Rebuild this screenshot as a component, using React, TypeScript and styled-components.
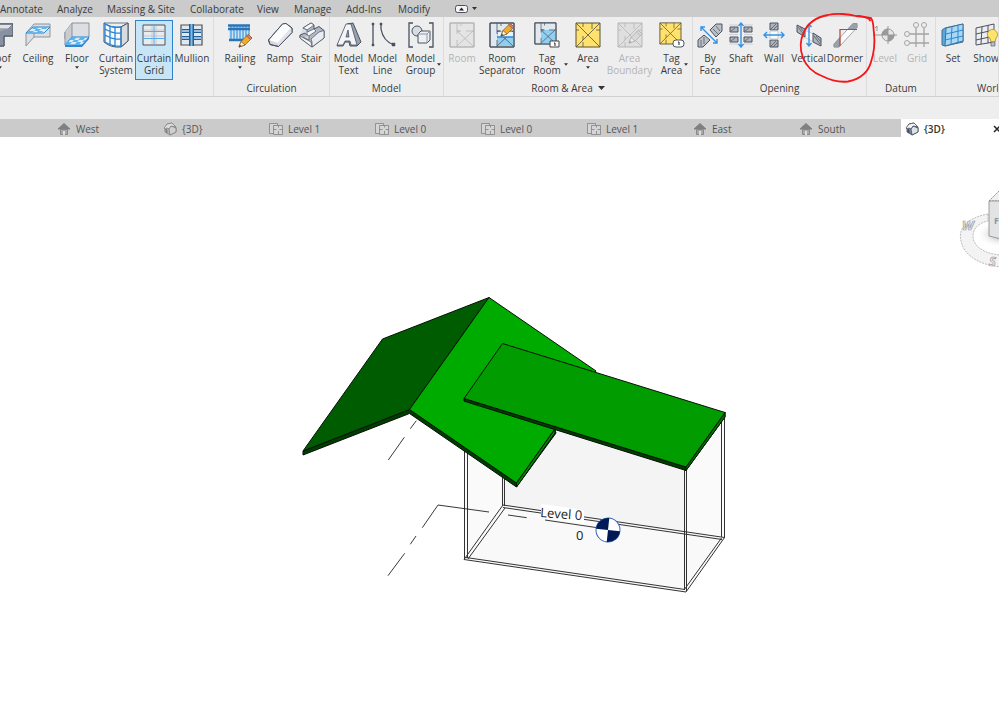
import React from "react";
import styled, { createGlobalStyle } from "styled-components";

const GlobalStyle = createGlobalStyle`
  * { box-sizing: border-box; }
  html, body, #root { height: 100%; }
  body {
    margin: 0;
    overflow: hidden;
    background: #fff;
    color: #3a3a3a;
    font-family: "Open Sans", "Noto Sans", sans-serif;
    font-size: 10px;
    line-height: 12px;
  }
  button {
    font: inherit;
    color: inherit;
    border: 0;
    padding: 0;
    margin: 0;
    background: none;
    white-space: nowrap;
  }
`;

const Page = styled.div`
  display: flex;
  flex-direction: column;
  min-height: 100%;
  overflow: hidden;
`;

const MenuBar = styled.nav`
  display: flex;
  align-items: center;
  height: 17px;
  gap: 16px;
  background: #cbcbcb;
  overflow: hidden;
`;

const MenuItem = styled.button<{ $w: number }>`
  flex: none;
  width: ${(p) => p.$w}px;
  text-align: left;
`;

const RibbonToggle = styled.button`
  display: flex;
  align-items: center;
  gap: 4px;
  margin-left: 9px;
`;

const Ribbon = styled.div`
  position: relative;
  display: flex;
  height: 80px;
  background: #eee;
  border-bottom: 1px solid #d0d0d0;
`;

const Panel = styled.section<{ $w?: number; $end?: boolean }>`
  flex: ${(p) => (p.$w ? "none" : "1")};
  width: ${(p) => (p.$w ? `${p.$w}px` : "auto")};
  min-width: 0;
  display: flex;
  flex-direction: column;
  overflow: hidden;
  border-right: 1px solid #dcdcdc;
  padding-right: ${(p) => (p.$end ? 2 : 0)}px;
`;

const ToolRow = styled.div<{ $end?: boolean }>`
  display: flex;
  justify-content: ${(p) => (p.$end ? "flex-end" : "flex-start")};
  height: 65px;
  padding-top: 3px;
`;

const ToolButton = styled.button<{ $w: number; $active?: boolean }>`
  position: relative;
  flex: none;
  display: flex;
  flex-direction: column;
  align-items: center;
  width: ${(p) => p.$w}px;
  height: 60px;
  padding-top: ${(p) => (p.$active ? 1 : 2)}px;
  border: ${(p) => (p.$active ? "1px solid #2f83cc" : "0")};
  background: ${(p) => (p.$active ? "#c6e6f7" : "transparent")};
  &:disabled {
    color: #b4b4b4;
  }
`;

const ToolIcon = styled.svg`
  flex: none;
  display: block;
  width: 26px;
  height: 26px;
  margin-bottom: 4px;
`;

const Caret = styled.svg`
  display: block;
  width: 4px;
  height: 3px;
  margin-top: 2px;
`;

const SideCaret = styled(Caret)`
  position: absolute;
  right: 2px;
  bottom: 14px;
`;

const PanelTitle = styled.div<{ $left?: boolean }>`
  display: flex;
  align-items: center;
  justify-content: ${(p) => (p.$left ? "flex-start" : "center")};
  gap: 5px;
  padding-left: ${(p) => (p.$left ? 41 : 0)}px;
  white-space: nowrap;
`;

const OptionsBar = styled.div`
  height: 22px;
  background: #eee;
`;

const DocTabs = styled.div`
  display: flex;
  height: 18px;
  padding-left: 53px;
  background: #cbcbcb;
  overflow: hidden;
`;

const DocTab = styled.button<{ $active?: boolean }>`
  flex: none;
  display: flex;
  align-items: center;
  gap: 5px;
  width: 106px;
  padding: 2px 6px 0 4px;
  color: ${(p) => (p.$active ? "#333" : "#555")};
  font-weight: ${(p) => (p.$active ? 600 : 400)};
  background: ${(p) => (p.$active ? "#fff" : "transparent")};
`;

const DocIcon = styled.svg`
  flex: none;
  width: 14px;
  height: 14px;
`;

const CloseMark = styled.svg`
  width: 8px;
  height: 8px;
  margin-left: auto;
`;

const Viewport = styled.main`
  position: relative;
  flex: 1;
  overflow: hidden;
  background: #fff;
`;

const Model = styled.svg`
  display: block;
  width: 800px;
  height: 586px;
`;

const ViewCube = styled.svg`
  position: absolute;
  top: 48px;
  right: 0;
  width: 44px;
  height: 90px;
`;

const Markup = styled.svg`
  position: absolute;
  z-index: 2;
  left: 796px;
  top: -7px;
  width: 84px;
  height: 76px;
  pointer-events: none;
`;

const DARK = "#4a5260";
const BLUE = "#2b84d3";

const Pencil = ({ grey }: { grey?: boolean }) => (
  <g stroke={grey ? "#aaa" : "#7a5628"} strokeWidth=".7">
    <path d="M12 14 14 8.500 21 1.500 25 5 18 12Z" fill={grey ? "#d8d8d8" : "#f2ab29"} />
    <path d="M19.500 3 21 1.500 25 5 23.500 6.500Z" fill={grey ? "#ddd" : "#dd837c"} />
    <path d="M12 14 14 8.500 18 12Z" fill={grey ? "#eee" : "#fff1d2"} />
    <path d="m12 14 .8-2 1.400 1.300Z" fill={grey ? "#999" : "#222"} />
  </g>
);

const RoomBase = ({ line, fill, light }: { line: string; fill: string; light: string }) => (
  <g stroke={line} fill="none">
    <path d="M1 1h24v24H1z" fill={light} />
    <path d="M8 9h16v15H8z" fill={fill} stroke="none" />
    <path d="M8 1v8M8 18v7M8 9h3M17 9h8M12 1v3M12 9h-4v3M8 9l16 15M24 9 8 24" strokeWidth=".8" />
    <path d="M1 1h24v24H1z" />
  </g>
);

const AreaBase = ({ line, fill }: { line: string; fill: string }) => (
  <g stroke={line} fill="none">
    <path d="M1 1h24v24H1z" fill={fill} />
    <path d="M1 1l24 24M25 1 1 25M8 1v4M8 20v5M1 8h3M21 8h4M17 1v6M8 14v4" strokeWidth=".8" />
  </g>
);

const icons: Record<string, React.ReactNode> = {
  roof: (
    <g stroke={DARK}>
      <path d="M0 2h26v12h-9v10H9V14H0Z" fill="#aeb4bd" />
      <path d="M0 2h26l-5 5H0Z" fill="#dfe2e6" stroke="#7c8592" />
      <path d="M21 7l5-5v12l-9-1v11h-4V9Z" fill="#8992a0" stroke="none" />
      <path d="M0 2h26v12h-9v10H9V14H0" fill="none" />
    </g>
  ),
  ceiling: (
    <g>
      <path d="M9 2h16v13H9L1 24V11Z" fill="#dcdee2" stroke="#8d939b" />
      <path d="M9 11v4" stroke="#8d939b" />
      <path d="M8 5h17l-6 6H1Z" fill="#d9f0fc" stroke={BLUE} />
      <path d="M9 5h5l-2 2H7zM18 5h5l-2 2h-5zM11 7h5l-2 2h-5zM4 9h5l-2 2H2zM13 9h5l-2 2h-5z" fill="#5db4ec" />
    </g>
  ),
  floor: (
    <g>
      <path d="M8 1h17v14l-7 2H1V10Z" fill="#dcdee2" stroke="#8d939b" />
      <path d="M8 1v14L1 23V10" fill="#c8ccd1" stroke="#8d939b" />
      <path d="M8 15h17l-7 8H1Z" fill="#d9f0fc" stroke={BLUE} />
      <path d="M8 15h5l-3 3H5zM17 15h5l-3 3h-5zM10 18h5l-2 2H8zM20 18h3l-2 2h-3zM3 20h5l-3 3H1zM13 20h4l-2 3h-5z" fill="#5db4ec" />
      <path d="M1 23h17l7-8v2l-7 8H1Z" fill="#3487cd" />
    </g>
  ),
  system: (
    <g fill="none">
      <path d="M1 1q8 6 17 4L25 1v18l-7 6Q8 26 1 20Z" fill="#f7fafc" stroke={DARK} />
      <path d="m18 5 7-4v18l-7 6Z" fill="#d8dce1" stroke={DARK} />
      <path d="M2 7q8 5 16 4M2 13q8 5 16 4M2 2v18q8 5 16 4V5Q9 6 2 2M7 4v19M12 5v20" stroke={BLUE} strokeWidth="1.300" />
      <path d="M1 1h24" stroke="#69798c" />
    </g>
  ),
  curtain: (
    <g fill="none">
      <path d="M2 3h22v20H2z" fill="#e9ebed" stroke={DARK} />
      <path d="M3 8h20M3 14h20M11 4v18M15 4v18" stroke="#c5cad0" />
      <path d="M2 16.500h22M13 3v20M2 9.500h22" stroke="#5aa9ec" />
    </g>
  ),
  mullion: (
    <g fill="none">
      <path d="M2 3h21v20H2z" fill="#e4e7ea" stroke={DARK} strokeWidth="1.200" />
      <path d="M3 9h19M3 16h19" stroke="#215f9c" strokeWidth="4" />
      <path d="M3 9h19M3 16h19" stroke="#b9e1fb" strokeWidth="1.500" />
      <path d="M12.500 2v22" stroke="#215f9c" strokeWidth="5" />
      <path d="M12.500 2v22" stroke="#78bdf0" strokeWidth="2" />
    </g>
  ),
  railing: (
    <g>
      <path d="M2 3h20v15H2z" fill="#c5e4f8" />
      <path d="M4 3v14M7 3v14M10 3v14M13 3v14M16 3v14M19 3v14M22 3v10" stroke={BLUE} />
      <path d="M1 3.500h22M1 7h22M2 18h16" stroke="#2b75b7" strokeWidth="2.500" />
      <g transform="translate(0 11)"><Pencil /></g>
    </g>
  ),
  ramp: (
    <g stroke={DARK} strokeLinejoin="round">
      <path d="M1.500 18 15.500 2 19 1.500 25 6V10.500L11.500 24.500 3 22.500Z" fill="#d3d8de" />
      <path d="M2 18 15.500 2 19 1.500 24 6 10.500 21Z" fill="#fcfdfe" stroke="none" />
      <path d="M10.500 21 25 6V10.500L11.500 24.500Z" fill="#e2e5ea" stroke="none" />
      <path d="M1.500 18 15.500 2 19 1.500 25 6V10.500L11.500 24.500 3 22.500Z" fill="none" />
    </g>
  ),
  stair: (
    <g stroke={DARK} strokeLinejoin="round">
      <path d="M4 6 12 1 15 3V7L20 4.500 25 8.500V16L13 25 1 16V13L6 11Z" fill="#b0b8c3" />
      <path d="M4 6 12 1 15 3 8 8ZM6 11 15 7 17 9 10 14Z" fill="#f7f8fa" strokeWidth=".7" />
      <path d="M1 13 6 11 8 13V8L4 6M10 14V18L4 15" fill="#d9dee4" strokeWidth=".7" />
      <path d="M12 17 20 10 25 8.500V16L13 25V20Z" fill="#e9ecf0" strokeWidth=".7" />
      <path d="M1 14 12 20 13 25 1 16Z" fill="#f7f8fa" strokeWidth=".7" />
    </g>
  ),
  text: (
    <g stroke={DARK} strokeLinejoin="round">
      <path d="M11 2 17 1 25 20 21 24H14L13 20H9L7 24H1Z" fill="#98a2af" />
      <path d="M1 23 10 2h5l6 21h-6l-1-4H9l-2 4ZM10 15h3l-1-7Z" fill="#f3f5f8" strokeWidth=".8" />
    </g>
  ),
  line: (
    <g stroke={DARK} fill="none">
      <path d="M3 2v21M11 2v5q2 12 13 16" strokeWidth="1.300" />
      <path d="M2 1h2v2H2zM2 22h2v2H2zM10 1h2v2h-2zM22 21h3v3h-3z" fill={DARK} strokeWidth=".5" />
    </g>
  ),
  group: (
    <g stroke={DARK} fill="none">
      <path d="M5 1H1v24h4M21 1h4v24h-4" strokeWidth="1.300" />
      <circle cx="9" cy="9" r="5" fill="#d8dde3" />
      <path d="m10 12 3-3h9v9l-3 3h-9Z" fill="#eef1f4" />
      <path d="M10 12h9v9M19 12l3-3" stroke="#8d98a5" />
    </g>
  ),
  room: <RoomBase line="#b7b7b7" fill="#e4e4e4" light="#e5e5e5" />,
  separator: (
    <g>
      <RoomBase line={DARK} fill="#8fcff1" light="#e2e9ee" />
      <path d="M9 10h15v5H9z" fill="#e4f2fa" />
      <path d="M8 15h17" stroke={BLUE} strokeWidth="1.500" />
      <Pencil />
    </g>
  ),
  tagroom: (
    <g>
      <g transform="scale(.88)"><RoomBase line={DARK} fill="#8fcff1" light="#e2e9ee" /></g>
      <path d="M16 19h9v6h-9z" fill="#fff" stroke="#444" />
      <path d="M20 21h1v3" stroke="#222" fill="none" />
    </g>
  ),
  area: <AreaBase line="#57513d" fill="#ffe16d" />,
  boundary: (
    <g>
      <AreaBase line="#b5b5b5" fill="#dfdfdf" />
      <g transform="translate(0 7)"><Pencil grey /></g>
    </g>
  ),
  tagarea: (
    <g>
      <g transform="scale(.88)"><AreaBase line="#57513d" fill="#ffe16d" /></g>
      <rect x="14" y="18" width="11" height="7" rx="3" fill="#fff" stroke="#4a5260" />
      <path d="M19 20h1v3" stroke="#222" fill="none" />
    </g>
  ),
  face: (
    <g>
      <path d="m13 8 6-6h6v7l-6 6ZM1 18l6-5 6 5-7 7H1Z" fill="#bbc0c7" stroke={DARK} />
      <path d="m16 7 5 5M19 4l4 5M4 18v6M7 15v7" stroke="#69717c" />
      <path d="M4 5 20 21M4 9V5h4M16 21h4v-4" stroke="#3492e8" fill="none" strokeWidth="1.400" />
    </g>
  ),
  shaft: (
    <g>
      <path d="M2 5h8v5H2zM16 5h8v5h-8zM2 15h8v5H2zM16 15h8v5h-8z" fill="#aeb4bc" stroke={DARK} />
      <path d="M3 9l4-3M17 9l4-3M3 19l4-3M17 19l4-3" stroke="#697079" />
      <path d="M1 12.500h9M16 12.500h9M1 3h9M16 3h9M1 22h9M16 22h9" stroke="#cdd0d4" />
      <path d="M13 1v24M10.500 4 13 1l2.500 3M10.500 22l2.500 3 2.500-3" stroke="#3492e8" fill="none" strokeWidth="1.400" />
    </g>
  ),
  wall: (
    <g>
      <path d="M9 1h8v7H9zM9 18h8v7H9z" fill="#aeb4bc" stroke={DARK} />
      <path d="m10 7 5-5M12 8l5-5M10 24l5-5M12 25l5-5" stroke="#697079" />
      <path d="M9 9h8v8H9z" fill="#fafafa" stroke="#c8cbd0" />
      <path d="M3 13h20M6 10l-3 3 3 3M20 10l3 3-3 3" stroke="#3492e8" fill="none" strokeWidth="1.400" />
    </g>
  ),
  vertical: (
    <g>
      <path d="M8 8l10 4v8L8 15Z" fill="#fafafa" stroke="#c8cbd0" />
      <path d="M1 3v7l8 5V7ZM17 11v9l8 4v-8Z" fill="#aeb4bc" stroke={DARK} />
      <path d="m2 5 6 8M4 5l5 6M18 14l6 8M20 14l5 6" stroke="#697079" />
      <path d="M13 2v22M10.500 5 13 2l2.500 3M10.500 21l2.500 3 2.500-3" stroke="#3492e8" fill="none" strokeWidth="1.400" />
    </g>
  ),
  dormer: (
    <g>
      <path d="M2 22 21 1.500H25V5.500L7 25H2Z" fill="#fbfbfb" stroke="#a3a8af" />
      <path d="M15.500 7.500 21 1.500H25V5.500L23 7.500ZM2 22 8 15.500V24L7 25H2Z" fill="#9ba1aa" stroke="#8a9099" strokeWidth=".7" />
      <path d="M8 24V7.500H25" fill="none" stroke="#bd4338" strokeWidth="1.200" />
    </g>
  ),
  level: (
    <g stroke="#999">
      <path d="M3 6 5 4v5M1 13h24M16 4v18" fill="none" />
      <circle cx="16" cy="13" r="6" fill="#e5e5e5" />
      <path d="M16 7v12a6 6 0 0 0 6-6H10a6 6 0 0 1 6-6" fill="#999" />
    </g>
  ),
  grid: (
    <g stroke="#a4a4a4" fill="none">
      <path d="M12 6v19M20 6v19M6 12h19M6 21h19" strokeWidth="1.300" />
      <circle cx="12" cy="3" r="2.500" />
      <circle cx="20" cy="3" r="2.500" />
      <circle cx="3" cy="12" r="2.500" />
      <circle cx="3" cy="21" r="2.500" />
    </g>
  ),
  set: (
    <g stroke="#3d6f9c">
      <path d="m2 8 3-2 18-4v18L5 24l-3-1Z" fill="#58a9df" />
      <path d="m6 6 17-4v17L5 24Z" fill="#a9d8f4" />
      <path d="m12 5-1 17M18 4v17M6 12l17-4M5 18l18-4" stroke={BLUE} />
    </g>
  ),
  show: (
    <g stroke={DARK}>
      <path d="m3 6 18-4v18L3 23Z" fill="#eceef1" />
      <path d="m9 5-1 17M15 3v18M3 12l18-4M3 18l18-4" />
      <path d="M15 15a5 5 0 1 1 8 1l-1 4h-4l-1-4Z" fill="#ffe46c" stroke="#c69a2a" />
      <path d="M18 20h4v4h-4z" fill="#b9bec6" strokeWidth=".6" />
    </g>
  ),
};

type Tool = {
  icon: string;
  label: string[];
  w: number;
  caret?: boolean;
  active?: boolean;
  disabled?: boolean;
};
type Group = { title: string; w?: number; end?: boolean; left?: boolean; more?: boolean; tools: Tool[] };

const groups: Group[] = [
  {
    title: "", w: 214, end: true,
    tools: [
      { icon: "roof", label: ["Roof"], w: 38, caret: true },
      { icon: "ceiling", label: ["Ceiling"], w: 38 },
      { icon: "floor", label: ["Floor"], w: 40, caret: true },
      { icon: "system", label: ["Curtain", "System"], w: 38 },
      { icon: "curtain", label: ["Curtain", "Grid"], w: 38, active: true },
      { icon: "mullion", label: ["Mullion"], w: 38 },
    ],
  },
  {
    title: "Circulation", w: 116,
    tools: [
      { icon: "railing", label: ["Railing"], w: 52, caret: true },
      { icon: "ramp", label: ["Ramp"], w: 28 },
      { icon: "stair", label: ["Stair"], w: 35 },
    ],
  },
  {
    title: "Model", w: 114,
    tools: [
      { icon: "text", label: ["Model", "Text"], w: 37 },
      { icon: "line", label: ["Model", "Line"], w: 31 },
      { icon: "group", label: ["Model", "Group"], w: 45, caret: true },
    ],
  },
  {
    title: "Room & Area", w: 249, more: true,
    tools: [
      { icon: "room", label: ["Room"], w: 36, disabled: true },
      { icon: "separator", label: ["Room", "Separator"], w: 44 },
      { icon: "tagroom", label: ["Tag", "Room"], w: 46, caret: true },
      { icon: "area", label: ["Area"], w: 36, caret: true },
      { icon: "boundary", label: ["Area", "Boundary"], w: 47, disabled: true },
      { icon: "tagarea", label: ["Tag", "Area"], w: 37, caret: true },
    ],
  },
  {
    title: "Opening", w: 174,
    tools: [
      { icon: "face", label: ["By", "Face"], w: 34 },
      { icon: "shaft", label: ["Shaft"], w: 28 },
      { icon: "wall", label: ["Wall"], w: 38 },
      { icon: "vertical", label: ["Vertical"], w: 31 },
      { icon: "dormer", label: ["Dormer"], w: 42 },
    ],
  },
  {
    title: "Datum", w: 69,
    tools: [
      { icon: "level", label: ["Level"], w: 36, disabled: true },
      { icon: "grid", label: ["Grid"], w: 28, disabled: true },
    ],
  },
  {
    title: "Work Plane", left: true,
    tools: [
      { icon: "set", label: ["Set"], w: 34 },
      { icon: "show", label: ["Show"], w: 32 },
    ],
  },
];

const menus: [string, number][] = [
  ["Annotate", 41], ["Analyze", 34], ["Massing & Site", 67], ["Collaborate", 51],
  ["View", 21], ["Manage", 36], ["Add-Ins", 36], ["Modify", 32],
];

const docs: { name: string; kind: "house" | "cube" | "plan"; active?: boolean }[] = [
  { name: "West", kind: "house" },
  { name: "{3D}", kind: "cube" },
  { name: "Level 1", kind: "plan" },
  { name: "Level 0", kind: "plan" },
  { name: "Level 0", kind: "plan" },
  { name: "Level 1", kind: "plan" },
  { name: "East", kind: "house" },
  { name: "South", kind: "house" },
  { name: "{3D}", kind: "cube", active: true },
];

const CaretShape = <path d="M0 0h5L2.500 3Z" fill="#333" />;

function DocGlyph({ kind, active }: { kind: string; active?: boolean }) {
  const line = active ? "#414b5a" : "#818181";
  return (
    <DocIcon viewBox="0 0 14 14" aria-hidden="true">
      {kind === "house" && (
        <g>
          <path d="M1 7 7 1.500l6 5.500Z" fill="#808080" stroke="#808080" />
          <path d="M3.500 7.500h7v5h-7Z" fill="#aaa" stroke="#888" />
          <path d="M6 9h2v4H6z" fill="#ddd" />
        </g>
      )}
      {kind === "plan" && (
        <g fill="#d5d5d5" stroke={line} strokeWidth=".8">
          <path d="M.500 1.500h8v10h-8z" />
          <path d="M4.500 3.500h9v9h-9z" />
          <path d="M4.500 7.500h3M10.500 7.500h3M9.500 3.500v2M9.500 9v3" fill="none" />
        </g>
      )}
      {kind === "cube" && (
        <g stroke={line} strokeWidth=".8" strokeLinejoin="round">
          <path d="m2 6 2-4 5-1 4 4v5l-6 3-5-3Z" fill={active ? "#7d8da4" : "#b5b5b5"} />
          <path d="M6 7 8 4l5 2v4l-6 3Z" fill={active ? "#dce2ea" : "#d0d0d0"} />
          <path d="m1 6 3-4 5-1 4 4-5-1-2 3-2-1-2 1Z" fill={active ? "#f4f6f8" : "#ddd"} />
          <path d="M3 7v3l1 1V8Z" fill={line} />
        </g>
      )}
    </DocIcon>
  );
}

function ModelDrawing() {
  return (
    <Model viewBox="0 137 800 586" role="img" aria-label="Roof model">
      <g stroke="none">
        <path d="M464 420 504 420V506L464 559Z" fill="#fafafa" />
        <path d="M503 410 720 425V537L503 506Z" fill="#f4f4f4" />
        <path d="M686 468 725 415V538L686 592Z" fill="#fafafa" />
        <path d="M503 506 725 538 686 592 464 559Z" fill="#f9f9f9" />
      </g>
      <g stroke="#333" strokeWidth="1" fill="none">
        <path d="M464.500 440V559M467.500 440V558" />
        <path d="M502.500 470V506M504.500 470V506" />
        <path d="M684.500 465V590M686.500 465V591M721.500 418V537M724.500 415V538" />
        <path d="M503 505 724.500 537.500M503 507.500 722 539.500M464 559.500 686 592M466 557.500 685 589.500" />
        <path d="M503 505 464 559.500M505 508 468 559M724.500 537.500 686 592M721.500 538 684 590" />
      </g>
      <g stroke="#222" strokeWidth=".9" fill="none">
        <path d="M416.300 420.700 410.300 428.700M404.300 437.300 388.300 460" />
        <path d="M489 512 438 505 422.300 527.700M416 536 410.300 544.300M404.700 553.300 388 575.700" />
        <path d="M508 515 526.700 517.700M545 520 596 527.500" />
      </g>
      <g stroke="#061006" strokeLinejoin="round">
        <path d="M303 451 409.500 409.500 516.500 483 555 430 556 433 516.500 487 409.500 413.500 303 455Z" fill="#003d00" />
        <path d="M382.500 339 489 297.500 409.500 409.500 303 451Z" fill="#005c00" />
        <path d="M489 297.500 596 371 516.500 483 409.500 409.500Z" fill="#00ab00" />
        <path d="M516.500 483 555 429V433L516.500 487Z" fill="#008b00" />
        <path d="M464 398.500 686 467 725 412.500V417L686 470.500 470 403 464 401Z" fill="#003e00" />
        <path d="M686 467 725 412.500V417L686 470.500Z" fill="#007500" />
        <path d="M502.500 343.500 725 412.500 686 467 464 398.500Z" fill="#009c00" />
      </g>
      <path d="M541 504 584 510V524L541 518Z" fill="#fff" />
      <g fill="#222" fontFamily="'Open Sans', sans-serif" fontSize="13">
        <text x="540" y="517" transform="rotate(4 540 517)">Level 0</text>
        <text x="576" y="540">0</text>
      </g>
      <g transform="rotate(6 608 530)">
        <circle cx="608" cy="530" r="12" fill="#fff" stroke="#3966c9" />
        <path d="M608 530V518A12 12 0 0 0 596 530ZM608 530V542A12 12 0 0 0 620 530Z" fill="#001a56" />
      </g>
    </Model>
  );
}

export default function App() {
  return (
    <Page>
      <GlobalStyle />
      <MenuBar>
        {menus.map(([name, w]) => (
          <MenuItem key={name} $w={w}>{name}</MenuItem>
        ))}
        <RibbonToggle aria-label="Minimize ribbon">
          <svg width="13" height="8" viewBox="0 0 13 8">
            <rect x=".5" y=".5" width="12" height="7" rx="2" fill="#f4f4f4" stroke="#4a5260" />
            <path d="M4 5.500 6.500 2.500 9 5.500Z" fill="#222" />
          </svg>
          <svg width="5" height="3" viewBox="0 0 5 3">{CaretShape}</svg>
        </RibbonToggle>
      </MenuBar>
      <Ribbon>
        {groups.map((g, i) => (
          <Panel key={i} $w={g.w} $end={g.end}>
            <ToolRow $end={g.end}>
              {g.tools.map((t) => (
                <ToolButton key={t.icon} $w={t.w} $active={t.active} disabled={t.disabled}>
                  <ToolIcon viewBox="0 0 26 26" aria-hidden="true">{icons[t.icon]}</ToolIcon>
                  {t.label.map((l) => <span key={l}>{l}</span>)}
                  {t.caret && t.label.length === 1 && <Caret viewBox="0 0 5 3">{CaretShape}</Caret>}
                  {t.caret && t.label.length === 2 && <SideCaret viewBox="0 0 5 3">{CaretShape}</SideCaret>}
                </ToolButton>
              ))}
            </ToolRow>
            <PanelTitle $left={g.left}>
              {g.title}
              {g.more && <svg width="7" height="4" viewBox="0 0 7 4"><path d="M0 0h7L3.500 4Z" fill="#333" /></svg>}
            </PanelTitle>
          </Panel>
        ))}
        <Markup viewBox="796 10 84 76" aria-hidden="true">
          <path
            d="M870 20.500C869 16 862 17 856 16C849 14 836 13 828 15C817 17 808 23 804 32C800 40 800 50 803 58C807 68 814 73 822 76C830 80 840 82.500 848 81.500C860 79 868 73 871 62C874 53 875 42 874 33C873 27 874 22 871 18L859 16"
            fill="none" stroke="#f5161a" strokeWidth="1.800" strokeLinecap="round"
          />
        </Markup>
      </Ribbon>
      <OptionsBar />
      <DocTabs>
        {docs.map((d, i) => (
          <DocTab key={i} $active={d.active}>
            <DocGlyph kind={d.kind} active={d.active} />
            {d.name}
            {d.active && (
              <CloseMark viewBox="0 0 8 8"><path d="m1 1 6 6M7 1 1 7" stroke="#222" strokeWidth="1.500" /></CloseMark>
            )}
          </DocTab>
        ))}
      </DocTabs>
      <Viewport>
        <ModelDrawing />
        <ViewCube viewBox="955 185 44 90" aria-label="View cube" role="img">
          <defs>
            <radialGradient id="shade">
              <stop offset="0" stopColor="#999" />
              <stop offset="1" stopColor="#fff" stopOpacity="0" />
            </radialGradient>
          </defs>
          <path d="M988 214C966 218 958 229 961 241C964 256 980 265 1001 267V255C984 254 973 246 973 236C973 229 978 223 988 221Z" fill="#f3f3f3" stroke="#aaa" strokeDasharray="2 1" strokeWidth=".8" />
          <ellipse cx="1002" cy="234" rx="26" ry="14" fill="url(#shade)" />
          <path d="M989 201 1001 189V201Z" fill="#f1f1f1" stroke="#888" strokeDasharray="2 1" />
          <path d="M989 201H1001V239L989 236Z" fill="#e2e3e4" stroke="#888" strokeWidth=".8" />
          <g fontFamily="'Open Sans', sans-serif" fontWeight="700">
            <text x="994" y="224" fontSize="9" fill="#8b939c">F</text>
            <g fontStyle="italic" fontSize="13" fill="#f3f3f3" stroke="#999" strokeWidth=".7">
              <text x="962" y="230">W</text>
              <text x="989" y="266">S</text>
            </g>
          </g>
        </ViewCube>
      </Viewport>
    </Page>
  );
}
